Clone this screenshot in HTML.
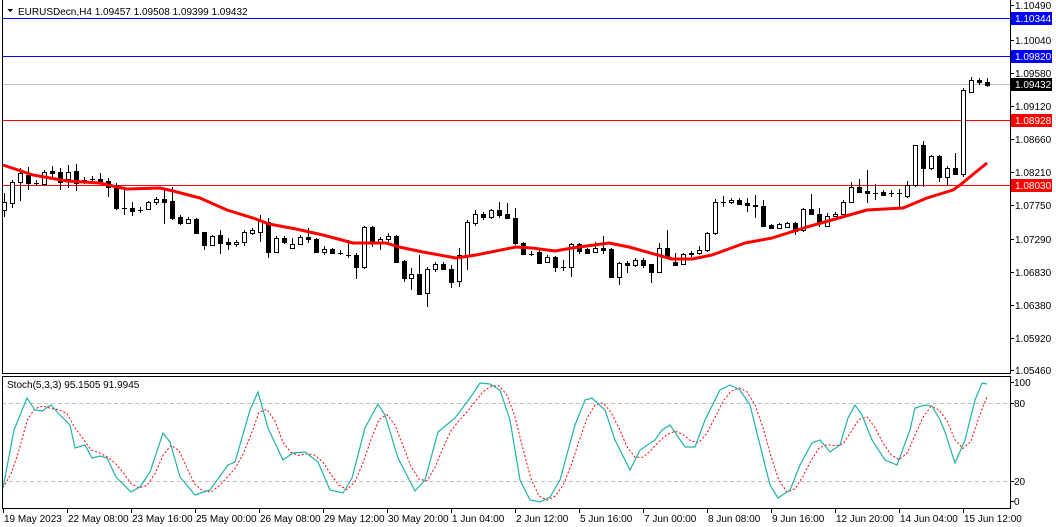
<!DOCTYPE html>
<html><head><meta charset="utf-8"><style>
html,body{margin:0;padding:0;background:#fff;}
svg{display:block;font-family:"Liberation Sans",sans-serif;font-size:10px;}
</style></head><body>
<svg id="s" width="1056" height="527" xmlns="http://www.w3.org/2000/svg" shape-rendering="crispEdges">
<rect width="1056" height="527" fill="#fff"/>
<g id="lines">
<line x1="2" y1="18.5" x2="1010" y2="18.5" stroke="#0000ff"/>
<line x1="2" y1="56.5" x2="1010" y2="56.5" stroke="#0000ff"/>
<line x1="2" y1="84.5" x2="1010" y2="84.5" stroke="#c0c0c0"/>
<line x1="2" y1="120.5" x2="1010" y2="120.5" stroke="#ff0000"/>
<line x1="2" y1="185.5" x2="1010" y2="185.5" stroke="#ff0000"/>
<line x1="2" y1="403.5" x2="1010" y2="403.5" stroke="#c0c0c0" stroke-dasharray="4,3"/>
<line x1="2" y1="481.5" x2="1010" y2="481.5" stroke="#c0c0c0" stroke-dasharray="4,3"/>
</g>
<g id="candles"></g>
<polyline id="ma" fill="none" stroke="#ff0000" stroke-width="3" shape-rendering="auto" stroke-linejoin="round"/>
<polyline id="stD" fill="none" stroke="#ff0000" stroke-width="1" stroke-dasharray="2,2" shape-rendering="auto"/>
<polyline id="stK" fill="none" stroke="#20b2aa" stroke-width="1.2" shape-rendering="auto"/>
<line x1="2.5" y1="0" x2="2.5" y2="373" stroke="#000"/>
<line x1="2" y1="373.5" x2="1010" y2="373.5" stroke="#000"/>
<line x1="1010.5" y1="0" x2="1010.5" y2="374" stroke="#000"/>
<line x1="2" y1="376.5" x2="1011" y2="376.5" stroke="#000"/>
<line x1="2.5" y1="376" x2="2.5" y2="509" stroke="#000"/>
<line x1="2" y1="508.5" x2="1011" y2="508.5" stroke="#000"/>
<line x1="1010.5" y1="376" x2="1010.5" y2="509" stroke="#000"/>
<polygon points="7,9 13,9 10,12" fill="#000"/>
<text x="18" y="15">EURUSDecn,H4  1.09457 1.09508 1.09399 1.09432</text>
<text x="7" y="388">Stoch(5,3,3) 95.1505 91.9945</text>
<g id="axis"></g>
</svg>
<script>
var NS="http://www.w3.org/2000/svg";
function el(t,a,p){var e=document.createElementNS(NS,t);for(var k in a)e.setAttribute(k,a[k]);(p||document.getElementById('s')).appendChild(e);return e;}
var C=[[210,202,193,217],[203,182,180,208],[182,173,168,201],[175,183,167,190],[183,183,180,186],[184,172,170,185],[171,173,166,177],[172,182,168,190],[179,172,165,188],[171,183,164,191],
[180,180,177,184],[179,179,176,183],[179,182,173,184],[181,187,178,197],[185,208,183,210],[208,208,188,215],[208,211,202,216],[210,210,207,213],[209,202,201,210],[202,199,197,205],
[199,202,188,224],[201,218,187,220],[217,223,215,225],[223,219,217,224],[219,233,218,234],[232,245,232,250],[245,236,235,246],[235,243,230,254],[242,244,238,250],[244,242,240,247],
[242,232,230,246],[233,230,228,235],[232,221,215,242],[222,252,218,258],[252,238,236,253],[238,242,236,244],[248,244,238,249],[244,237,235,245],[237,239,228,243],[239,252,238,253],
[252,249,246,255],[249,253,248,254],[253,253,250,255],[255,255,240,258],[255,267,253,279],[267,227,226,269],[227,242,226,247],[243,239,237,250],[239,236,233,242],[236,262,235,263],
[261,278,260,282],[278,274,268,290],[274,294,255,295],[293,269,267,307],[269,264,262,272],[264,269,262,270],[269,282,265,288],[281,255,248,287],[255,222,220,270],[223,214,210,226],
[214,217,212,220],[217,210,209,219],[210,215,202,218],[214,218,203,219],[218,243,208,245],[243,254,242,255],[254,254,251,256],[252,263,250,264],[262,257,255,263],[257,267,256,272],
[267,267,260,271],[267,244,243,277],[244,251,243,254],[249,253,248,254],[252,248,242,253],[248,250,236,254],[249,277,248,278],[277,263,262,285],[263,265,261,273],[265,260,258,267],
[260,265,258,268],[264,272,264,283],[272,248,243,273],[248,257,230,258],[262,265,253,266],[264,254,253,265],[253,254,251,257],[253,250,246,255],[250,233,232,252],[233,202,199,235],
[202,202,196,207],[202,200,198,204],[200,204,198,205],[203,205,198,212],[205,206,195,218],[206,226,200,227],[225,228,224,229],[228,224,223,229],[227,223,222,228],[223,231,222,235],
[230,209,208,232],[209,214,194,215],[214,223,208,227],[226,216,213,227],[216,214,212,217],[214,202,200,215],[202,187,182,203],[187,192,179,193],[191,193,170,203],[193,193,184,200],
[192,195,190,196],[193,193,190,197],[193,193,189,207],[196,185,181,198],[185,145,145,187],[145,168,141,187],[168,156,155,170],[156,177,155,182],[177,168,166,185],[168,174,153,175],
[174,90,88,177],[92,80,77,93],[80,82,78,85],[82,85,78,87]];
var g=document.getElementById('candles');
C.forEach(function(c,i){
  var x=Math.round(4+i*7.99);
  var o=c[0],cl=c[1],h=c[2],l=c[3];
  el('line',{x1:x+.5,y1:h,x2:x+.5,y2:l,stroke:'#000'},g);
  var t=Math.min(o,cl),b=Math.max(o,cl);
  if(b-t<1){el('line',{x1:x-2,y1:t+.5,x2:x+3,y2:t+.5,stroke:'#000'},g);}
  else el('rect',{x:x-1.5,y:t+.5,width:4,height:b-t,fill:cl<o?'#fff':'#000',stroke:'#000'},g);
});
var ma=[[3,165],[33,175],[67,181],[100,183],[117,187],[127,189],[160,188],[173,191],[200,198],[227,210],[256,219],[269,224],[296,229],[323,235],[353,243],[386,243],[399,247],[423,252],[456,258],[476,255],[516,247],[532,248],[555,251],[572,248],[609,243],[629,247],[672,259],[692,259],[712,255],[745,243],[772,238],[807,227],[867,210],[903,208],[927,198],[953,190],[960,185],[987,163]];
document.getElementById('ma').setAttribute('points',ma.map(function(p){return p.join(',')}).join(' '));
var K=[[3,488],[14,430],[27,398],[35,410],[42,411],[51,405],[60,415],[70,425],[75,448],[85,445],[92,458],[100,456],[107,458],[116,477],[131,492],[140,487],[150,472],[163,433],[170,442],[180,477],[195,495],[210,490],[228,465],[235,462],[250,410],[258,392],[268,428],[283,460],[293,453],[305,452],[318,462],[330,490],[343,493],[352,478],[365,428],[378,404],[385,415],[398,458],[415,491],[425,480],[438,432],[455,418],[470,398],[480,383],[490,384],[500,390],[510,420],[520,480],[530,500],[540,502],[550,497],[560,480],[575,425],[585,400],[592,398],[605,410],[615,440],[630,470],[640,450],[655,440],[662,430],[670,425],[685,447],[695,447],[705,420],[720,390],[730,385],[740,390],[750,405],[760,445],[770,485],[778,498],[790,490],[800,465],[812,443],[820,440],[830,452],[840,445],[848,418],[855,405],[862,415],[872,440],[885,460],[897,465],[910,430],[915,408],[925,405],[932,406],[940,420],[945,432],[955,463],[965,440],[975,400],[982,383],[987,384]];
document.getElementById('stK').setAttribute('points',K.map(function(p){return p.join(',')}).join(' '));
function interp(x){for(var i=1;i<K.length;i++){if(K[i][0]>=x){var a=K[i-1],b=K[i];return a[1]+(b[1]-a[1])*(x-a[0])/(b[0]-a[0]);}}return K[K.length-1][1];}
var S=[];for(var x=3;x<=987;x+=8)S.push([x,interp(x)]);
var D=[];for(var i=0;i<S.length;i++){var a=S[Math.max(0,i-2)][1],b=S[Math.max(0,i-1)][1];D.push([S[i][0],((a+b+S[i][1])/3).toFixed(1)]);}
document.getElementById('stD').setAttribute('points',D.map(function(p){return p.join(',')}).join(' '));
var ax=document.getElementById('axis');
var P=[["1.10490",5],["1.10040",40],["1.09580",73],["1.09120",106],["1.08660",139],["1.08210",172],["1.07750",205],["1.07290",239],["1.06830",272],["1.06380",305],["1.05920",338],["1.05460",370]];
P.forEach(function(p){el('line',{x1:1010,y1:p[1]+.5,x2:1014,y2:p[1]+.5,stroke:'#000'},ax);var t=el('text',{x:1015,y:p[1]+4},ax);t.textContent=p[0];});
var H=[["1.10344",18,"#0000ff"],["1.09820",56,"#0000ff"],["1.09432",84,"#000"],["1.08928",120,"#ff0000"],["1.08030",185,"#ff0000"]];
H.forEach(function(p){el('rect',{x:1011,y:p[1]-6,width:41,height:13,fill:p[2]},ax);var t=el('text',{x:1015,y:p[1]+4,fill:'#fff'},ax);t.textContent=p[0];});
[["100",382],["80",403],["20",481],["0",501]].forEach(function(p){el('line',{x1:1010,y1:p[1]+.5,x2:1014,y2:p[1]+.5,stroke:'#000'},ax);var t=el('text',{x:1014,y:p[1]+4},ax);t.textContent=p[0];});
var X=["19 May 2023","22 May 08:00","23 May 16:00","25 May 00:00","26 May 08:00","29 May 12:00","30 May 20:00","1 Jun 04:00","2 Jun 12:00","5 Jun 16:00","7 Jun 00:00","8 Jun 08:00","9 Jun 16:00","12 Jun 20:00","14 Jun 04:00","15 Jun 12:00"];
X.forEach(function(s,i){var x=3+i*64;el('line',{x1:x+.5,y1:509,x2:x+.5,y2:513,stroke:'#000'},ax);var t=el('text',{x:x+1,y:522},ax);t.textContent=s;});
</script>
</body></html>
